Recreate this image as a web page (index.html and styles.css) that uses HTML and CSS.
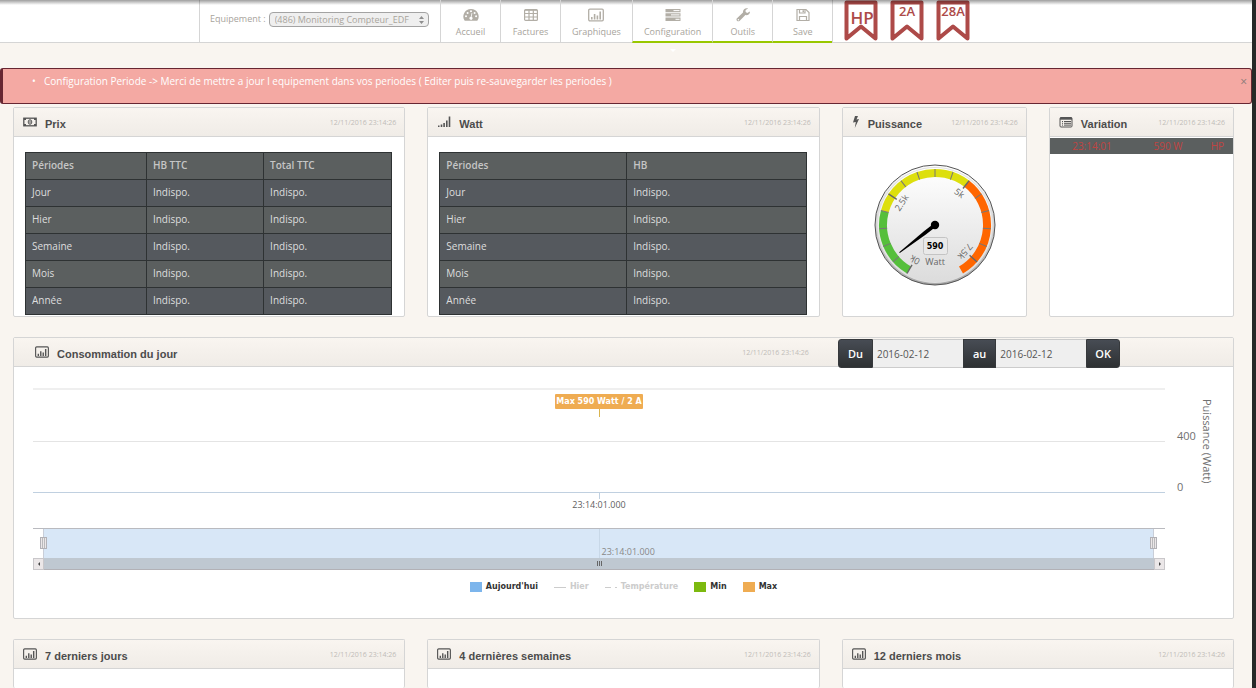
FILE: index.html
```html
<!DOCTYPE html>
<html lang="fr">
<head>
<meta charset="utf-8">
<title>Monitoring Compteur EDF</title>
<link rel="stylesheet" href="styles.css">
</head>
<body>
<svg class="defs" aria-hidden="true">
  <symbol id="i-chart" viewBox="0 0 16 13">
    <rect x=".7" y=".7" width="14.6" height="11.6" rx="1.2" fill="none" stroke="currentColor" stroke-width="1.3"/>
    <path d="M3 8.5h1.6V11H3zM5.8 5.5h1.6V11H5.8zM8.600 7h1.600v4H8.600zM11.400 3H13v8h-1.600z" fill="currentColor"/>
  </symbol>
</svg>

<header class="topbar">
  <div class="equip">
    <label for="equipement">Equipement :</label>
    <span class="select-wrap">
      <select id="equipement"><option>(486) Monitoring Compteur_EDF</option></select>
      <svg class="arrows" viewBox="0 0 5 8"><path d="M2.500 0L5 3H0zM2.500 8L0 5h5z" fill="#8f8f8f"/></svg>
    </span>
  </div>
  <nav class="nav">
    <a href="#" class="nav-item">
      <svg width="16" height="14" viewBox="0 0 16 14"><path fill-rule="evenodd" fill="currentColor" d="M8 1a7.500 7.500 0 0 0-6.600 11.300q.3.500.9.500h11.400q.6 0 .9-.500A7.500 7.500 0 0 0 8 1zM3 7.300a1 1 0 1 1 0 2 1 1 0 0 1 0-2zM4.600 3.900a1 1 0 1 1 0 2 1 1 0 0 1 0-2zM8 2.200a1 1 0 1 1 0 2 1 1 0 0 1 0-2zM8.600 5l.8.200-.8 3.600a1.600 1.600 0 1 1-.8-.1zM11.600 3.900a1 1 0 1 1 0 2 1 1 0 0 1 0-2zM13.100 7.300a1 1 0 1 1 0 2 1 1 0 0 1 0-2z"/></svg>
      <span>Accueil</span></a>
    <a href="#" class="nav-item">
      <svg width="14" height="14" viewBox="0 0 14 14"><g fill="none" stroke="currentColor" stroke-width="1.200"><rect x=".6" y="1.600" width="12.800" height="10.800" rx="1"/><path d="M.6 5.500h12.800M.6 9h12.800M5 1.600v10.800M9.300 1.600v10.800"/><path d="M1 2.200h12"/></g></svg>
      <span>Factures</span></a>
    <a href="#" class="nav-item">
      <svg width="16" height="14"><use href="#i-chart"/></svg>
      <span>Graphiques</span></a>
    <a href="#" class="nav-item active open">
      <svg width="16" height="14" viewBox="0 0 16 14"><path fill="currentColor" d="M.5 1h15v3.200H.5zM.5 5.200h15v3.300H.5zM.5 9.600h15v3.300H.5z"/><path stroke="#fff" d="M8.500 2.600h6M6 6.900h8.500M10.500 11.300h4"/></svg>
      <span>Configuration</span></a>
    <a href="#" class="nav-item active">
      <svg width="14" height="14" viewBox="0 0 14 14"><path fill="currentColor" fill-rule="evenodd" d="M13.800 3.500l-2.500 1.500-1.700-1V2l2.500-1.500C9.400-.4 6.600 1.600 7 4.600L1 10.300c-1.600 1.700.7 4 2.500 2.600L9.400 7.100c3 .5 5.100-1.500 4.400-3.600zM2.400 11a.7.700 0 1 1 0 1.400.7.700 0 0 1 0-1.400z"/></svg>
      <span>Outils</span></a>
    <a href="#" class="nav-item active">
      <svg width="14" height="14" viewBox="0 0 14 14"><g fill="none" stroke="currentColor" stroke-width="1.200"><path d="M1 1.500h9l3 3v8H1zM3.500 12.500v-4h7v4"/><path d="M3.500 1.500V5H9V1.500"/></g><path fill="currentColor" d="M6.500 2.200H8v2H6.500z"/></svg>
      <span>Save</span></a>
  </nav>
  <div class="flags">
    <svg class="flag" viewBox="0 0 34 41"><path d="M2.500 2.500h29v36L17 26.500 2.500 38.500z"/><text x="18" y="24" class="flag-lg">HP</text></svg>
    <svg class="flag" viewBox="0 0 34 41"><path d="M2.500 2.500h29v36L17 26.500 2.500 38.500z"/><text x="17" y="16">2A</text></svg>
    <svg class="flag" viewBox="0 0 34 41"><path d="M2.500 2.500h29v36L17 26.500 2.500 38.500z"/><text x="17" y="16">28A</text></svg>
  </div>
</header>

<div class="alert" role="alert">
  <ul><li>Configuration Periode -&gt; Merci de mettre a jour l equipement dans vos periodes ( Editer puis re-sauvegarder les periodes )</li></ul>
  <button type="button" class="close" aria-label="Fermer">×</button>
</div>

<main class="grid">
  <section class="panel span-2">
    <header class="panel-head">
      <svg class="icon" viewBox="0 0 14 12"><rect x=".8" y="2.200" width="12.400" height="7.600" fill="none" stroke="currentColor" stroke-width="1.300"/><path d="M1 2h2v2H1zM11 2h2v2h-2zM1 8h2v2H1zM11 8h2v2h-2z" fill="currentColor"/><ellipse cx="7" cy="6" rx="1.800" ry="2.300" fill="none" stroke="currentColor"/><path d="M7 4.500v3" stroke="currentColor"/></svg>
      <h2>Prix</h2><time>12/11/2016 23:14:26</time>
    </header>
    <div class="panel-body">
      <table class="data">
        <colgroup><col class="c-third"><col class="c-mid"><col></colgroup>
        <thead><tr><th>Périodes</th><th>HB TTC</th><th>Total TTC</th></tr></thead>
        <tbody>
          <tr><td>Jour</td><td>Indispo.</td><td>Indispo.</td></tr>
          <tr><td>Hier</td><td>Indispo.</td><td>Indispo.</td></tr>
          <tr><td>Semaine</td><td>Indispo.</td><td>Indispo.</td></tr>
          <tr><td>Mois</td><td>Indispo.</td><td>Indispo.</td></tr>
          <tr><td>Année</td><td>Indispo.</td><td>Indispo.</td></tr>
        </tbody>
      </table>
    </div>
  </section>

  <section class="panel span-2">
    <header class="panel-head">
      <svg class="icon" viewBox="0 0 14 12"><path d="M1 9.500h1.500V11H1zM3.700 8.500h1.600V11H3.700zM6.300 7h1.600v4H6.300zM9 4.500h1.600V11H9zM11.700.5h1.600V11h-1.600z" fill="currentColor"/></svg>
      <h2>Watt</h2><time>12/11/2016 23:14:26</time>
    </header>
    <div class="panel-body">
      <table class="data">
        <colgroup><col class="c-half"><col></colgroup>
        <thead><tr><th>Périodes</th><th>HB</th></tr></thead>
        <tbody>
          <tr><td>Jour</td><td>Indispo.</td></tr>
          <tr><td>Hier</td><td>Indispo.</td></tr>
          <tr><td>Semaine</td><td>Indispo.</td></tr>
          <tr><td>Mois</td><td>Indispo.</td></tr>
          <tr><td>Année</td><td>Indispo.</td></tr>
        </tbody>
      </table>
    </div>
  </section>

  <section class="panel">
    <header class="panel-head">
      <svg class="icon icon-slim" viewBox="0 0 8 12"><path d="M3 0h3L4.500 3.500 7 3 2.800 12l1-6L1 6.600z" fill="currentColor"/></svg>
      <h2>Puissance</h2><time>12/11/2016 23:14:26</time>
    </header>
    <div class="gauge-body">
      <svg class="gauge" width="122" height="122" viewBox="-61 -61 122 122" role="img" aria-label="590 Watt">
        <defs>
          <linearGradient id="rim" x1="0" y1="0" x2="0" y2="1"><stop offset="0" stop-color="#fff"/><stop offset="1" stop-color="#a8a8a8"/></linearGradient>
          <linearGradient id="face" x1="0" y1="0" x2="0" y2="1"><stop offset="0" stop-color="#fff"/><stop offset="1" stop-color="#dcdcdc"/></linearGradient>
        </defs>
        <circle r="60" fill="url(#rim)" stroke="#555"/>
        <circle r="58" fill="#e0e0e0"/>
        <circle r="57" fill="url(#face)"/>
        <g fill="none" stroke-width="8">
          <path stroke="#55bf3b" d="M-26 45A52 52 0 0 1 -50.200 -13.500"/>
          <path stroke="#dddf0d" d="M-50.200 -13.500A52 52 0 0 1 31.700 -41.300"/>
          <path stroke="#ff6600" d="M31.700 -41.300A52 52 0 0 1 26 45"/>
        </g>
        <g stroke="#777" stroke-width="1">
          <path transform="rotate(-131.250)" d="M0-56v8"/><path transform="rotate(-112.500)" d="M0-56v8"/><path transform="rotate(-93.750)" d="M0-56v8"/><path transform="rotate(-75)" d="M0-56v8"/>
          <path transform="rotate(-37.500)" d="M0-56v8"/><path transform="rotate(-18.750)" d="M0-56v8"/><path d="M0-56v8"/><path transform="rotate(18.750)" d="M0-56v8"/>
          <path transform="rotate(56.250)" d="M0-56v8"/><path transform="rotate(75)" d="M0-56v8"/><path transform="rotate(93.750)" d="M0-56v8"/><path transform="rotate(112.500)" d="M0-56v8"/>
        </g>
        <g stroke="#666" stroke-width="1.400">
          <path transform="rotate(-150)" d="M0-56v10"/><path transform="rotate(-56.250)" d="M0-56v10"/><path transform="rotate(37.500)" d="M0-56v10"/><path transform="rotate(131.250)" d="M0-56v10"/>
        </g>
        <g class="gauge-label">
          <text transform="rotate(-150)" y="-37">0k</text><text transform="rotate(-56.250)" y="-37">2.5k</text><text transform="rotate(37.500)" y="-37">5k</text><text transform="rotate(131.250)" y="-37">7.5k</text>
        </g>
        <rect x="-11.500" y="12.500" width="24" height="17" rx="2" fill="#e9e9e9" stroke="#c4c4c4"/>
        <text class="gauge-value" y="24">590</text>
        <text class="gauge-unit" y="40">Watt</text>
        <path transform="rotate(-127.900)" d="M-.5-45h1l1.300 32V0h-3.600v-13z" fill="#000"/>
        <circle r="4.200" fill="#000"/>
      </svg>
    </div>
  </section>

  <section class="panel">
    <header class="panel-head">
      <svg class="icon" viewBox="0 0 14 12"><rect x="1" y="1.500" width="12" height="9.500" rx="1" fill="none" stroke="currentColor"/><path d="M1 1.500h12v2.200H1z" fill="currentColor"/><path d="M3 5.500h1M5 5.500h7M3 7.300h1M5 7.300h7M3 9.100h1M5 9.100h7" stroke="currentColor"/></svg>
      <h2>Variation</h2><time>12/11/2016 23:14:26</time>
    </header>
    <table class="variation"><tbody><tr><td>23:14:01</td><td>590 W</td><td>HP</td></tr></tbody></table>
  </section>

  <section class="panel span-6">
    <header class="panel-head wide">
      <svg class="icon"><use href="#i-chart"/></svg>
      <h2>Consommation du jour</h2><time>12/11/2016 23:14:26</time>
      <form class="range">
        <label for="du">Du</label><input id="du" type="text" value="2016-02-12">
        <label for="au">au</label><input id="au" type="text" value="2016-02-12">
        <button type="button">OK</button>
      </form>
    </header>
    <div class="chart">
      <div class="chart-main">
        <div class="chart-left">
          <div class="plot">
            <div class="band band-top"><div class="flag-max">Max 590 Watt / 2 A</div></div>
            <div class="band"></div>
          </div>
          <div class="xaxis"><span>23:14:01.000</span></div>
        </div>
        <div class="yaxis">
          <div class="ticks"><span>400</span><span>0</span></div>
          <div class="ytitle">Puissance (Watt)</div>
        </div>
      </div>
      <div class="navigator">
        <div class="mask"><span class="nav-label">23:14:01.000</span><i class="handle left"></i><i class="handle right"></i></div>
        <div class="scroll">
          <button type="button" aria-label="Précédent"><svg viewBox="0 0 4 6"><path d="M3 1v4L1 3z"/></svg></button>
          <div class="thumb"><i></i><i></i><i></i></div>
          <button type="button" aria-label="Suivant"><svg viewBox="0 0 4 6"><path d="M1 1v4l2-2z"/></svg></button>
        </div>
      </div>
    </div>
    <ul class="legend">
      <li><i class="sw blue"></i>Aujourd'hui</li>
      <li class="off"><i class="line"></i>Hier</li>
      <li class="off"><i class="dash"></i>Température</li>
      <li><i class="sw green"></i>Min</li>
      <li><i class="sw orange"></i>Max</li>
    </ul>
  </section>

  <section class="panel span-2 tall">
    <header class="panel-head"><svg class="icon"><use href="#i-chart"/></svg><h2>7 derniers jours</h2><time>12/11/2016 23:14:26</time></header>
  </section>
  <section class="panel span-2 tall">
    <header class="panel-head"><svg class="icon"><use href="#i-chart"/></svg><h2>4 dernières semaines</h2><time>12/11/2016 23:14:26</time></header>
  </section>
  <section class="panel span-2 tall">
    <header class="panel-head"><svg class="icon"><use href="#i-chart"/></svg><h2>12 derniers mois</h2><time>12/11/2016 23:14:26</time></header>
  </section>
</main>
</body>
</html>
```
FILE: styles.css
```css
* { box-sizing: border-box; }

body {
  margin: 0;
  min-height: 100vh;
  border-right: 4px solid #262928;
  background: #f9f5f0;
  color: #555;
  font: 10px/14px "Open Sans", sans-serif;
}

h2, ul { margin: 0; padding: 0; }
ul { list-style: none; }
button, input, select { font-family: inherit; margin: 0; }
.defs { position: absolute; width: 0; height: 0; }

/* Top bar */
.topbar {
  position: relative;
  display: flex;
  height: 43px;
  padding-left: 199px;
  background: #fff;
  border-bottom: 1px solid #d5d5d5;
  color: #a8a49c;
  font-size: 9px;
}
.topbar::before {
  content: "";
  position: absolute;
  inset: 0 0 auto;
  height: 5px;
  background: linear-gradient(rgba(0, 0, 0, .38), rgba(0, 0, 0, 0));
}
.equip {
  display: flex;
  gap: 3px;
  width: 241px;
  padding: 12px 0 0 10px;
  border-left: 1px solid #d5d5d5;
}
.select-wrap { position: relative; height: 15px; }
.equip select {
  appearance: none;
  display: block;
  width: 160px;
  height: 15px;
  padding: 0 16px 0 5px;
  border: 1px solid #a3a3a3;
  border-radius: 4px;
  background: #efefef;
  color: inherit;
  font-size: 9px;
  line-height: 12px;
}
.arrows { position: absolute; top: 4px; right: 5px; width: 5px; height: 8px; }
.nav { display: flex; border-right: 1px solid #d5d5d5; height: 42px; }
.nav-item {
  position: relative;
  display: flex;
  flex-direction: column;
  align-items: center;
  gap: 3px;
  min-width: 60px;
  height: 43px;
  padding: 8px 11px 0;
  border-left: 1px solid #d5d5d5;
  color: inherit;
  text-decoration: none;
}
.nav-item svg { color: #b2aea6; }
.nav-item.active { border-bottom: 2px solid #99c700; }
.nav-item.open::after {
  content: "";
  position: absolute;
  top: 49px;
  left: 37px;
  border: 3px solid transparent;
  border-top-color: #fff;
  border-bottom: 0;
}
.flags { display: flex; gap: 12px; padding-left: 11px; }
.flag { width: 34px; height: 41px; }
.flag path { fill: #fff; stroke: #ad4a48; stroke-width: 4; stroke-linejoin: round; }
.flag text { fill: #ad4a48; font: 600 13px "Open Sans", sans-serif; text-anchor: middle; }
.flag .flag-lg { font-size: 17px; }

/* Alert */
.alert {
  display: flex;
  justify-content: space-between;
  height: 36px;
  margin: 25px 0 3px;
  padding: 5px 4px 0 41px;
  border: 1px solid #672632;
  border-left-width: 3px;
  border-radius: 3px;
  background: #f4a9a3;
  color: #fff;
}
.alert li { position: relative; }
.alert li::before { content: "•"; position: absolute; left: -12px; }
.close { align-self: flex-start; padding: 1px 0 0; border: 0; background: none; color: #8a7a78; font-size: 12px; line-height: 14px; }

/* Panels */
.grid {
  display: grid;
  grid-template-columns: repeat(6, 1fr);
  gap: 20px 22px;
  padding: 0 18px 0 13px;
}
.span-2 { grid-column: span 2; }
.span-6 { grid-column: span 6; }
.panel { min-width: 0; background: #fff; border: 1px solid #d5d5d5; border-radius: 2px; }
.tall { min-height: 49px; border-bottom: 0; }
.panel-head {
  display: flex;
  align-items: center;
  height: 29px;
  padding: 0 8px 0 9px;
  border-bottom: 1px solid #d5d5d5;
  background: linear-gradient(#f9f5f0, #f0ece7);
}
.icon { flex: none; width: 14px; height: 12px; margin-right: 8px; }
.icon-slim { width: 8px; }
.panel-head h2 { padding-top: 3px; font: bold 11px/14px "Liberation Sans", Arial, sans-serif; color: #4c4c4c; }
.panel-head time { margin-left: auto; font-size: 7px; line-height: 10px; padding-top: 2px; color: #bfbcb8; white-space: nowrap; }
.panel-body { padding: 15px 12px 1px 11px; }

.data { width: 100%; table-layout: fixed; border-collapse: collapse; color: #dedede; }
.data th, .data td { height: 27px; padding: 0 6px 2px; border: 1px solid #2e3233; text-align: left; }
.data th { font-weight: 600; color: #c6c6c6; }
.data tr { background: #5b5f5f; }
.data tbody tr:nth-child(odd) { background: #55595e; }
.c-third { width: 33%; }
.c-mid { width: 32%; }
.c-half { width: 51%; }

.gauge-body { display: flex; justify-content: center; padding: 27px 0 0 1px; }
.gauge-label, .gauge-unit { fill: #666; font: 9px "Open Sans", sans-serif; text-anchor: middle; }
.gauge-label { font-size: 9px; }
.gauge-value { fill: #000; font: bold 8px "DejaVu Sans", sans-serif; text-anchor: middle; }

.variation { width: 100%; margin-top: 1px; border-collapse: collapse; table-layout: fixed; background: #5b5f5f; color: #c04442; }
.variation td { height: 16px; padding: 0; text-align: center; }
.variation td:nth-child(1) { width: 46%; }
.variation td:nth-child(2) { width: 37%; }

/* Daily chart */
.wide { padding: 0 113px 0 21px; }
.range { display: flex; align-self: flex-start; height: 29px; margin: 1px 0 0 29px; }
.range label, .range button {
  padding: 0 9px;
  border: 1px solid #36393c;
  background: linear-gradient(#474c54, #2e3133);
  color: #fff;
  font-size: 11px;
  font-weight: 600;
  line-height: 27px;
}
.range label:first-child { border-radius: 3px 0 0 3px; }
.range button { padding: 0 8px; border-radius: 0 3px 3px 0; }
.range input { width: 90px; padding: 0 4px; border: 1px solid #ccc; border-width: 1px 0; border-radius: 0; background: #efefef; color: #555; font-size: 10px; }

.chart { padding: 21px 0 0 19px; }
.chart-main { display: flex; }
.chart-left { flex: 1; }
.plot { border-bottom: 1px solid #c0d0e0; }
.band { height: 51px; border-top: 1px solid #e4e4e4; }
.band-top { height: 53px; border-top: 2px solid #efefef; display: flex; justify-content: center; }
.flag-max {
  position: relative;
  align-self: flex-start;
  height: 15px;
  margin-top: 4px;
  padding: 0 1px;
  background: #efac52;
  border-radius: 1px;
  color: #fff;
  font: bold 8px/16px "DejaVu Sans", sans-serif;
}
.flag-max::after { content: ""; position: absolute; top: 15px; left: 50%; height: 8px; border-left: 1px solid #d9b44f; }
.xaxis { position: relative; height: 35px; padding-top: 6px; text-align: center; color: #606060; font-size: 9px; line-height: 11px; }
.xaxis::before { content: ""; position: absolute; top: 0; left: 50%; height: 6px; border-left: 1px solid #c0d0e0; }
.yaxis { display: flex; gap: 4px; width: 68px; padding-left: 12px; color: #707070; font-size: 11px; }
.ticks { display: flex; flex-direction: column; gap: 37px; padding-top: 41px; }
.ytitle { writing-mode: vertical-rl; padding-top: 11px; }

.navigator { margin-right: 68px; }
.mask { position: relative; height: 30px; margin: 0 11px 0 10px; background: #d8e7f7; border: 1px solid #b2b1b6; border-bottom: 0; border-color: #b2b1b6 #c9ced8; }
.mask::before { content: ""; position: absolute; left: 50%; top: 0; height: 29px; border-left: 1px solid #c8d8e8; }
.mask::after { content: ""; position: absolute; left: -11px; right: -12px; top: -1px; border-top: 1px solid #b9babf; }
.nav-label { position: absolute; left: 50%; bottom: 1px; padding-left: 3px; color: #888; font-size: 9px; line-height: 11px; }
.handle { position: absolute; top: 8px; width: 7px; height: 12px; border: 1px solid #b2b1b6; background: linear-gradient(90deg, #ebe7e8 1px, #b9b9bb 1px, #b9b9bb 2px, #ebe7e8 2px, #ebe7e8 3px, #b9b9bb 3px, #b9b9bb 4px, #ebe7e8 4px); }
.handle.left { left: -4px; }
.handle.right { right: -4px; }
.scroll { display: flex; height: 12px; }
.scroll button { display: flex; flex: none; align-items: center; justify-content: center; width: 11px; padding: 0; border: 1px solid #c9c7ca; background: #ebe7e8; }
.scroll svg { width: 4px; height: 6px; fill: #444; }
.thumb { display: flex; flex: 1; justify-content: center; align-items: center; gap: 1px; background: #bfc8d1; border-bottom: 1px solid #b2b1b6; }
.thumb i { width: 1px; height: 5px; background: #666; }

.legend { display: flex; justify-content: center; gap: 16px; padding: 10px 0 24px; color: #333; font: bold 8px/14px "DejaVu Sans", sans-serif; }
.legend li { display: flex; align-items: center; gap: 4px; }
.legend .off { color: #ccc; }
.sw { width: 12px; height: 10px; }
.blue { background: #7cb5ec; }
.green { background: #7cb90f; }
.orange { background: #efac52; }
.line, .dash { width: 12px; height: 1px; background: #ccc; }
.dash { background: linear-gradient(90deg, #ccc 6px, transparent 6px, transparent 10px, #ccc 10px); }
```
